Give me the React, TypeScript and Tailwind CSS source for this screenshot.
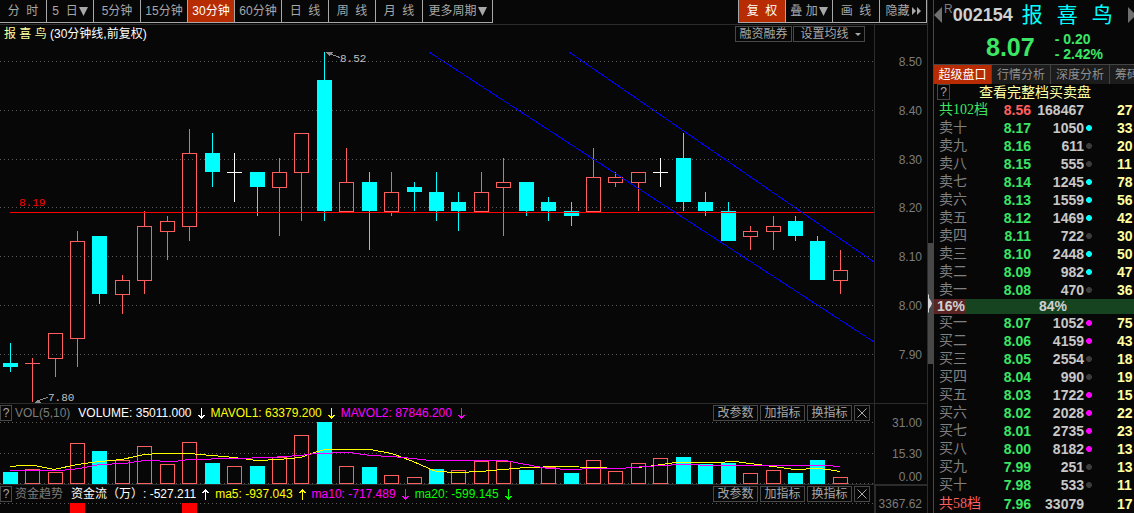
import React from "react";

const SANS = "font-['Liberation_Sans','Noto_Sans_CJK_SC',sans-serif]";
const SERIF = "font-['Liberation_Serif','Noto_Sans_CJK_SC',serif]";

const RED = "#ff5f5f";
const CYAN = "#00ffff";

type Kind = "up" | "down" | "flat";
// x, kind, high, body top, body bottom, low, volume top
type Bar = [number, Kind, number, number, number, number, number];

const bars: Bar[] = [
  [10, "down", 343, 363, 367, 372, 472],
  [32, "up", 358, 363, 364, 402, 469],
  [55, "up", 333, 333, 359, 377, 472],
  [77, "up", 231, 241, 339, 367, 443],
  [99, "down", 236, 236, 294, 304, 451],
  [122, "up", 275, 280, 295, 314, 460],
  [144, "up", 211, 226, 281, 294, 446],
  [167, "up", 216, 221, 232, 260, 464],
  [189, "up", 129, 153, 227, 241, 442],
  [212, "down", 133, 153, 172, 187, 463],
  [234, "flat", 153, 172, 173, 202, 466],
  [257, "down", 172, 172, 187, 216, 466],
  [279, "up", 158, 172, 188, 236, 457],
  [301, "up", 133, 133, 173, 221, 435],
  [324, "down", 52, 80, 211, 221, 422],
  [346, "up", 148, 182, 212, 212, 466],
  [369, "down", 172, 182, 211, 250, 467],
  [391, "up", 172, 192, 212, 216, 475],
  [414, "down", 182, 187, 192, 211, 477],
  [436, "down", 172, 192, 211, 221, 469],
  [458, "down", 192, 202, 211, 231, 470],
  [481, "up", 172, 192, 212, 212, 461],
  [503, "up", 158, 182, 188, 236, 461],
  [526, "down", 182, 182, 211, 216, 470],
  [548, "down", 197, 202, 211, 221, 467],
  [571, "down", 202, 211, 216, 226, 473],
  [593, "up", 148, 177, 212, 212, 460],
  [615, "up", 172, 177, 183, 187, 471],
  [638, "up", 172, 172, 183, 211, 463],
  [660, "flat", 158, 172, 173, 187, 458],
  [683, "down", 133, 158, 202, 211, 457],
  [705, "down", 192, 202, 211, 216, 464],
  [728, "down", 202, 211, 241, 241, 463],
  [750, "up", 226, 231, 237, 250, 473],
  [773, "up", 216, 226, 232, 250, 470],
  [795, "down", 216, 221, 236, 241, 473],
  [817, "down", 236, 241, 280, 280, 460],
  [840, "up", 250, 270, 281, 294, 477],
];

// volume bars whose fill differs from the candle above them
const hollowVolume = new Set([414, 458, 548]);

const ma1 =
  "10,466 22,465 35,465 54,469 77,464 99,461 122,459 144,454 160,453 189,453 212,455 234,457 257,460 279,459 301,457 311,453 325,449 370,449 392,453 413,461 436,471 458,472 481,471 503,469 526,467 560,466 598,467 615,468 638,467 655,465 675,462 715,462 735,461 750,463 773,466 795,469 817,468 828,469 840,471";
const ma2 =
  "10,470 60,470 80,468 99,464 125,463 144,460 175,461 189,459 234,458 270,457 300,455 315,453 350,452 370,455 391,456 413,458 430,460 505,460 526,464 548,468 571,469 593,468 620,468 645,466 680,464 720,465 825,465 840,466";

function Dotted({ y }: { y: number }) {
  return <line x1="0" x2="874" y1={y + 0.5} y2={y + 0.5} stroke="#5a5a5a" strokeDasharray="1 3" />;
}

function Candle({ bar }: { bar: Bar }) {
  const [x, kind, high, top, bottom, low] = bar;
  const color = kind === "down" ? CYAN : kind === "up" ? RED : "#ffffff";
  const solid = kind === "down" || bottom - top < 2;
  return (
    <g>
      {solid ? (
        <>
          <rect x={x} y={high} width="1" height={low - high} fill={color} />
          <rect x={x - 7} y={top} width="15" height={bottom - top} fill={color} />
        </>
      ) : (
        <>
          <rect x={x} y={high} width="1" height={top - high} fill={color} />
          <rect x={x} y={bottom} width="1" height={Math.max(0, low - bottom)} fill={color} />
          <rect x={x - 6.5} y={top + 0.5} width="14" height={bottom - top - 1} fill="none" stroke={color} />
        </>
      )}
    </g>
  );
}

function PriceChart() {
  return (
    <svg
      viewBox="0 45 874 358"
      className="block w-full overflow-visible"
      shapeRendering="crispEdges"
      role="img"
      aria-label="K线"
    >
      {[61, 110, 159, 207, 256, 305, 354].map((y) => (
        <Dotted key={y} y={y} />
      ))}
      {bars.map((b) => (
        <Candle key={b[0]} bar={b} />
      ))}
      <rect x="10" y="212" width="864" height="1" fill="#ff0000" />
      <line x1="429" y1="52" x2="874" y2="342" stroke="#0000ff" />
      <line x1="569" y1="52" x2="874" y2="262" stroke="#0000ff" />
      <g fill="#8c8c8c" stroke="#8c8c8c">
        <path d="M326 52H333L329 56Z" stroke="none" />
        <path d="M330 54L340 57.5" />
        <path d="M34 403H41L38 399Z" stroke="none" />
        <path d="M38 400.5L48 397.5" />
      </g>
      <g className="font-['Liberation_Mono',monospace] text-[11px]" fill="#c0c0c0">
        <text x="340" y="62">8.52</text>
        <text x="48" y="401">7.80</text>
        <text x="19" y="206" fill="#ff0000">8.19</text>
      </g>
    </svg>
  );
}

function VolumeChart() {
  return (
    <svg viewBox="0 422 874 62" className="block w-full" shapeRendering="crispEdges" role="img" aria-label="VOL">
      {[422, 453, 483].map((y) => (
        <Dotted key={y} y={y} />
      ))}
      {bars.map(([x, kind, , , , , top]) =>
        kind === "down" && !hollowVolume.has(x) ? (
          <rect key={x} x={x - 7} y={top} width="15" height={484 - top} fill={CYAN} />
        ) : (
          <rect key={x} x={x - 6.5} y={top + 0.5} width="14" height={483 - top} fill="none" stroke={RED} />
        ),
      )}
      <polyline points={ma1} transform="translate(0 .5)" fill="none" stroke="#ffff00" />
      <polyline points={ma2} transform="translate(0 .5)" fill="none" stroke="#ff00ff" />
    </svg>
  );
}

function FundChart() {
  return (
    <svg viewBox="0 503 874 10" className="block w-full" shapeRendering="crispEdges" role="img" aria-label="资金趋势">
      <Dotted y={503} />
      <rect x="70" y="503" width="15" height="10" fill="#ff0000" />
      <rect x="182" y="503" width="15" height="10" fill="#ff0000" />
    </svg>
  );
}

function Caret() {
  return (
    <svg viewBox="0 0 9 9" className="ml-px size-[9px]" fill="currentColor" aria-hidden="true">
      <path d="M0 0H9L4.5 9Z" />
    </svg>
  );
}

function Arrow({ up = false }: { up?: boolean }) {
  return (
    <svg
      viewBox="0 0 7 11"
      className="h-[11px] w-[7px]"
      fill="none"
      stroke="currentColor"
      shapeRendering="crispEdges"
      aria-hidden="true"
    >
      <path d={up ? "M3.5 11V0M.5 4L3.5 1L6.5 4" : "M3.5 0V11M.5 7L3.5 10L6.5 7"} />
    </svg>
  );
}

function ToolButton({ active = false, wide = false, children }: { active?: boolean; wide?: boolean; children: React.ReactNode }) {
  return (
    <button
      type="button"
      className={`flex h-[23px] items-center justify-center whitespace-pre border-r border-b border-[#a8a8a8] ${
        wide ? "w-[70px]" : "w-[47px]"
      } ${active ? "bg-[#b82c04] text-white" : "text-[#a8a8a8]"}`}
    >
      {children}
    </button>
  );
}

function SmallButton({ className, children, label }: { className: string; children: React.ReactNode; label?: string }) {
  return (
    <button
      type="button"
      aria-label={label}
      className={`flex h-4 items-center justify-center border border-[#484848] text-[#a8a8a8] ${className}`}
    >
      {children}
    </button>
  );
}

type Reading = { text: string; color: string; up?: boolean };

function IndicatorHeader({ name, readings }: { name: string; readings: Reading[] }) {
  return (
    <div className="flex h-[18px] items-center justify-between pr-1">
      <div className="flex items-center whitespace-nowrap">
        <SmallButton className="w-3">?</SmallButton>
        <span className="ml-[3px] mr-2 text-[#7c7c7c]">{name}</span>
        <div className="flex gap-[6px]">
          {readings.map((r) => (
            <span key={r.text} className={`flex items-center gap-[6px] ${r.color}`}>
              {r.text}
              <Arrow up={r.up} />
            </span>
          ))}
        </div>
      </div>
      <div className="flex gap-[2px]">
        <SmallButton className="w-[45px]">改参数</SmallButton>
        <SmallButton className="w-[45px]">加指标</SmallButton>
        <SmallButton className="w-[45px]">换指标</SmallButton>
        <SmallButton className="w-4" label="关闭">
          <svg viewBox="0 0 10 10" className="size-[10px]" stroke="currentColor" aria-hidden="true">
            <path d="M.5 .5L9.5 9.5M9.5 .5L.5 9.5" />
          </svg>
        </SmallButton>
      </div>
    </div>
  );
}

type Mark = "cyan" | "magenta" | "dim" | "none";
type Quote = [string, string, string, Mark, string];

const asks: Quote[] = [
  ["卖十", "8.17", "1050", "cyan", "33"],
  ["卖九", "8.16", "611", "dim", "20"],
  ["卖八", "8.15", "555", "dim", "11"],
  ["卖七", "8.14", "1245", "cyan", "78"],
  ["卖六", "8.13", "1559", "cyan", "56"],
  ["卖五", "8.12", "1469", "cyan", "42"],
  ["卖四", "8.11", "722", "dim", "30"],
  ["卖三", "8.10", "2448", "cyan", "50"],
  ["卖二", "8.09", "982", "cyan", "47"],
  ["卖一", "8.08", "470", "dim", "36"],
];

const bids: Quote[] = [
  ["买一", "8.07", "1052", "magenta", "75"],
  ["买二", "8.06", "4159", "magenta", "43"],
  ["买三", "8.05", "2554", "dim", "18"],
  ["买四", "8.04", "990", "dim", "19"],
  ["买五", "8.03", "1722", "magenta", "15"],
  ["买六", "8.02", "2028", "magenta", "22"],
  ["买七", "8.01", "2735", "magenta", "23"],
  ["买八", "8.00", "8182", "magenta", "13"],
  ["买九", "7.99", "251", "dim", "13"],
  ["买十", "7.98", "533", "dim", "11"],
];

const markColor: Record<Mark, string> = {
  cyan: "text-[#00ffff]",
  magenta: "text-[#ff00ff]",
  dim: "text-[#3c3c3c]",
  none: "hidden",
};

function QuoteRow({
  quote,
  nameColor = "text-[#808080]",
  priceColor = "text-[#3ce664]",
  height = "h-[18px]",
}: {
  quote: Quote;
  nameColor?: string;
  priceColor?: string;
  height?: string;
}) {
  const [name, price, volume, mark, count] = quote;
  return (
    <tr className={height}>
      <th scope="row" className={`whitespace-nowrap pl-[5px] text-left font-normal ${SERIF} ${nameColor}`}>
        {name}
      </th>
      <td className={`text-right ${priceColor}`}>{price}</td>
      <td className="text-right text-[#c8c8c8]">{volume}</td>
      <td className="pl-[2px]">
        <svg viewBox="0 0 6 6" className={`size-[6px] ${markColor[mark]}`} fill="currentColor" aria-hidden="true">
          <path d="M2 0H4L6 2V4L4 6H2L0 4V2Z" />
        </svg>
      </td>
      <td className="pl-[23px] text-[#ffffa0]">{count}</td>
    </tr>
  );
}

function QuoteTable({ label, children }: { label: string; children: React.ReactNode }) {
  return (
    <table aria-label={label} className="w-full table-fixed text-[14px] leading-[18px] font-bold">
      <colgroup>
        <col className="w-[60px]" />
        <col className="w-[37px]" />
        <col className="w-[53px]" />
        <col className="w-[10px]" />
        <col />
      </colgroup>
      <tbody>{children}</tbody>
    </table>
  );
}

function Tab({ active = false, children }: { active?: boolean; children: React.ReactNode }) {
  return (
    <button
      type="button"
      role="tab"
      aria-selected={active}
      className={`h-full shrink-0 border-r border-[#444444] ${
        active ? "w-[58px] bg-[#b82c04] text-white" : "w-[59px] bg-[#1c1c1c] text-[#909090]"
      }`}
    >
      {children}
    </button>
  );
}

function QuotePanel() {
  return (
    <aside className="w-[201px] shrink-0 overflow-hidden border-l border-[#484848]">
      <div className="flex h-[30px] items-center">
        <button type="button" aria-label="上一只" className="text-[#707070]">
          <svg viewBox="0 0 8 16" className="h-4 w-2" fill="currentColor">
            <path d="M8 0V16L0 8Z" />
          </svg>
        </button>
        <h1 className="ml-[2px] flex items-center">
          <sup className="text-[12px] leading-none text-[#808080]">R</sup>
          <span className="text-[18px] leading-6 font-bold text-[#d0d0d0]">002154</span>
        </h1>
        <h2 className="ml-[9px] flex gap-[14px] text-[21px] leading-6 text-[#00ffff]">
          <span>报</span>
          <span>喜</span>
          <span>鸟</span>
        </h2>
        <button type="button" aria-label="下一只" className="ml-auto text-[#707070]">
          <svg viewBox="0 0 6 16" className="h-4 w-[6px]" fill="currentColor">
            <path d="M0 0L8 8L0 16Z" />
          </svg>
        </button>
      </div>
      <div className="flex h-[34px] items-center gap-5 pl-[52px] font-bold text-[#3ce664]">
        <span className="text-[25px] leading-8">8.07</span>
        <div className="text-[14px] leading-[15px] whitespace-nowrap">
          <div>- 0.20</div>
          <div>- 2.42%</div>
        </div>
      </div>
      <div role="tablist" className="flex h-5 border-t border-[#444444]">
        <Tab active>超级盘口</Tab>
        <Tab>行情分析</Tab>
        <Tab>深度分析</Tab>
        <button type="button" role="tab" className="shrink-0 bg-[#1c1c1c] px-[5px] text-[#909090]">
          筹码
        </button>
      </div>
      <div className="flex h-4 items-center pl-[3px]">
        <SmallButton className="w-[13px]">?</SmallButton>
        <a href="#depth" className="ml-[29px] text-[14px] leading-4 whitespace-nowrap text-[#ffffa0]">
          查看完整档买卖盘
        </a>
      </div>
      <QuoteTable label="卖盘">
        <QuoteRow
          quote={["共102档", "8.56", "168467", "none", "27"]}
          nameColor="text-[#3ce664]"
          priceColor="text-[#ff5f5f]"
          height="h-[19px]"
        />
        {asks.map((q) => (
          <QuoteRow key={q[0]} quote={q} />
        ))}
      </QuoteTable>
      <div className="flex h-[15px] items-center text-[14px] leading-[15px] font-bold text-[#d0d0d0]">
        <div className="w-[16%] bg-[#5a2424] pl-[3px]">16%</div>
        <div className="w-[84%] bg-[#164420] pl-[73px]">84%</div>
      </div>
      <QuoteTable label="买盘">
        {bids.map((q) => (
          <QuoteRow key={q[0]} quote={q} />
        ))}
        <QuoteRow quote={["共58档", "7.96", "33079", "none", "17"]} nameColor="text-[#ff5f5f]" height="h-[20px]" />
      </QuoteTable>
    </aside>
  );
}

export default function App() {
  return (
    <div className={`flex h-screen overflow-hidden bg-[#070707] text-[12px] leading-4 ${SANS}`}>
      <main className="flex min-w-0 flex-1 flex-col border-r border-[#2c2c2c]">
        <nav className="flex h-[25px] shrink-0 justify-between border-b border-[#2c2c2c]">
          <div className="flex">
            <ToolButton>{"分  时"}</ToolButton>
            <ToolButton>
              {"5  日"}
              <Caret />
            </ToolButton>
            <ToolButton>5分钟</ToolButton>
            <ToolButton>15分钟</ToolButton>
            <ToolButton active>30分钟</ToolButton>
            <ToolButton>60分钟</ToolButton>
            <ToolButton>{"日  线"}</ToolButton>
            <ToolButton>{"周  线"}</ToolButton>
            <ToolButton>{"月  线"}</ToolButton>
            <ToolButton wide>
              更多周期
              <Caret />
            </ToolButton>
          </div>
          <div className="flex h-[23px] border-l border-[#a8a8a8]">
            <ToolButton active>{"复  权"}</ToolButton>
            <ToolButton>
              {"叠 加"}
              <Caret />
            </ToolButton>
            <ToolButton>{"画  线"}</ToolButton>
            <ToolButton>
              隐藏
              <svg viewBox="0 0 9 8" className="ml-[2px] h-2 w-[9px]" fill="currentColor" aria-hidden="true">
                <path d="M0 0L4 4L0 8ZM5 0L9 4L5 8Z" />
              </svg>
            </ToolButton>
          </div>
        </nav>

        <section className="flex shrink-0 border-b border-[#2c2c2c]">
          <div className="min-w-0 flex-1 border-r border-[#2c2c2c]">
            <div className="flex h-5 items-start justify-between pt-px pr-[9px]">
              <h2 className="pl-1 whitespace-pre text-white">
                <span className="text-[#ffffa0]">报 喜 鸟</span>
                {" (30分钟线,前复权)"}
              </h2>
              <div className="flex gap-px">
                <SmallButton className="w-[57px]">融资融券</SmallButton>
                <SmallButton className="w-[72px] gap-[6px] pl-[3px]">
                  设置均线
                  <svg viewBox="0 0 6 3" className="h-[3px] w-[6px]" fill="currentColor" aria-hidden="true">
                    <path d="M0 0H6L3 3Z" />
                  </svg>
                </SmallButton>
              </div>
            </div>
            <PriceChart />
          </div>
          <div className="flex w-[52px] flex-col justify-between pt-[29px] pr-[5px] pb-10 text-right text-[#7c7c7c]">
            {["8.50", "8.40", "8.30", "8.20", "8.10", "8.00", "7.90"].map((p) => (
              <span key={p}>{p}</span>
            ))}
          </div>
        </section>

        <section className="flex shrink-0 border-b border-[#2c2c2c]">
          <div className="min-w-0 flex-1 border-r border-[#2c2c2c]">
            <IndicatorHeader
              name="VOL(5,10)"
              readings={[
                { text: "VOLUME: 35011.000", color: "text-white" },
                { text: "MAVOL1: 63379.200", color: "text-[#ffff00]" },
                { text: "MAVOL2: 87846.200", color: "text-[#ff00ff]" },
              ]}
            />
            <VolumeChart />
          </div>
          <div className="flex w-[52px] flex-col pt-3 pr-[5px] text-right leading-[14px] text-[#7c7c7c]">
            <span>31.00</span>
            <span className="mt-[17px]">15.30</span>
            <span className="mt-[9px]">0.00</span>
          </div>
        </section>

        <section className="flex min-h-0 flex-1">
          <div className="min-w-0 flex-1 border-r border-[#2c2c2c]">
            <IndicatorHeader
              name="资金趋势"
              readings={[
                { text: "资金流（万）: -527.211", color: "text-white", up: true },
                { text: "ma5: -937.043", color: "text-[#ffff00]", up: true },
                { text: "ma10: -717.489", color: "text-[#ff00ff]" },
                { text: "ma20: -599.145", color: "text-[#00ff00]" },
              ]}
            />
            <FundChart />
          </div>
          <div className="w-[52px] border-t border-l border-[#2c2c2c] pt-[10px] pr-[5px] text-right text-[#7c7c7c]">
            3367.62
          </div>
        </section>
      </main>

      <div className="flex w-[5px] shrink-0 flex-col" aria-hidden="true">
        <div className="grow-[243]" />
        <div className="flex h-[121px] items-center bg-[#484848]">
          <svg viewBox="0 0 4 19" className="h-[19px] w-1" fill="#d8d8d8">
            <path d="M0 0L1 1V4L3 7L4 9.5L3 12L1 15V18L0 19Z" />
          </svg>
        </div>
        <div className="grow-[149]" />
      </div>

      <QuotePanel />
    </div>
  );
}
